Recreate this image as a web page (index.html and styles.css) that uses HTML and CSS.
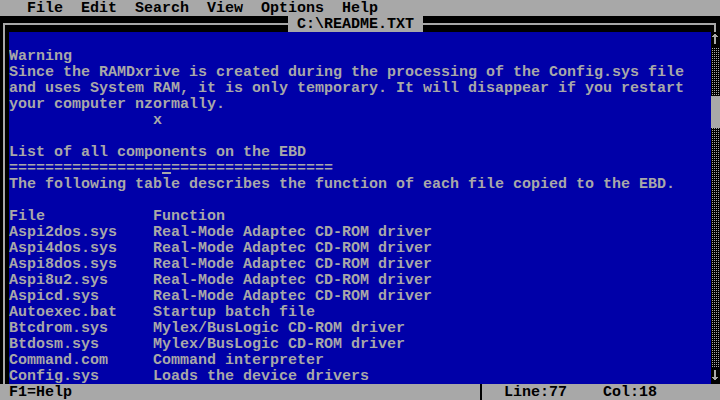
FILE: index.html
```html
<!DOCTYPE html>
<html>
<head>
<meta charset="utf-8">
<title>C:\README.TXT</title>
<link rel="stylesheet" href="styles.css">
</head>
<body>
<div class="screen">
  <div class="menubar">   File  Edit  Search  View  Options  Help</div>
  <div class="titlerow">
    <span class="corner-tl"></span><span class="hline hline-left"></span><span class="title"> C:\README.TXT </span><span class="hline hline-right"></span><span class="corner-tr"></span>
  </div>
  <div class="editor">
    <div class="vborder"></div>
    <pre class="text">

Warning
Since the RAMDxrive is created during the processing of the Config.sys file
and uses System RAM, it is only temporary. It will disappear if you restart
your computer nzormally.
                x

List of all components on the EBD
=================<span class="cursor">=</span>==================
The following table describes the function of each file copied to the EBD.

File            Function
Aspi2dos.sys    Real-Mode Adaptec CD-ROM driver
Aspi4dos.sys    Real-Mode Adaptec CD-ROM driver
Aspi8dos.sys    Real-Mode Adaptec CD-ROM driver
Aspi8u2.sys     Real-Mode Adaptec CD-ROM driver
Aspicd.sys      Real-Mode Adaptec CD-ROM driver
Autoexec.bat    Startup batch file
Btcdrom.sys     Mylex/BusLogic CD-ROM driver
Btdosm.sys      Mylex/BusLogic CD-ROM driver
Command.com     Command interpreter
Config.sys      Loads the device drivers</pre>
    <div class="scrollbar">
      <div class="arrow"><svg width="9" height="16" viewBox="0 0 9 16"><path d="M3 2h2v1h1v1h1v1h-2v7h-2v-7h-2v-1h1v-1h1z" fill="#a8a8a8"/></svg></div>
      <div class="track">
        <div class="dots track-top"></div>
        <div class="thumb"></div>
        <div class="dots track-bottom"></div>
      </div>
      <div class="arrow"><svg width="9" height="16" viewBox="0 0 9 16"><path d="M3 2h2v7h2v1h-1v1h-1v1h-2v-1h-1v-1h-1v-1h2z" fill="#a8a8a8"/></svg></div>
    </div>
  </div>
  <div class="status"> F1=Help                                             <span class="vbar"></span>  Line:77    Col:18</div>
</div>
</body>
</html>
```

FILE: styles.css
```css
* {
  box-sizing: border-box;
  margin: 0;
  padding: 0;
}

html,
body {
  background: #000;
}

body {
  width: 720px;
  height: 400px;
  overflow: hidden;
  font-family: "Liberation Mono", monospace;
  font-size: 15px;
  line-height: 16px;
  font-weight: bold;
}

.screen {
  display: flex;
  flex-direction: column;
  width: 720px;
  height: 400px;
}

.menubar {
  height: 16px;
  padding-top: 1px;
  background: #a8a8a8;
  color: #000;
  white-space: pre;
}

.titlerow {
  display: flex;
  height: 16px;
  background: #000;
}

.corner-tl {
  flex: 0 0 9px;
  background:
    linear-gradient(#a8a8a8, #a8a8a8) 3px 7px / 6px 2px no-repeat,
    linear-gradient(#a8a8a8, #a8a8a8) 3px 7px / 2px 9px no-repeat;
}

.corner-tr {
  flex: 0 0 9px;
  background:
    linear-gradient(#a8a8a8, #a8a8a8) 0 7px / 5px 2px no-repeat,
    linear-gradient(#a8a8a8, #a8a8a8) 3px 7px / 2px 9px no-repeat;
}

.hline {
  background: linear-gradient(#a8a8a8, #a8a8a8) 0 7px / 100% 2px no-repeat;
}

.hline-left {
  flex: 0 0 279px;
}

.hline-right {
  flex: 1;
}

.title {
  flex: 0 0 135px;
  padding-top: 1px;
  background: #a8a8a8;
  color: #000;
  white-space: pre;
}

.editor {
  display: flex;
  height: 352px;
}

.vborder {
  flex: 0 0 9px;
  background: #000 linear-gradient(#a8a8a8, #a8a8a8) 3px 0 / 2px 100% no-repeat;
}

.text {
  flex: 1;
  padding-top: 1px;
  background: #0000a8;
  color: #a8a8a8;
  font: inherit;
  white-space: pre;
  overflow: hidden;
}

.cursor {
  text-decoration: underline 2px #a8a8a8;
  text-underline-offset: 0;
}

.scrollbar {
  flex: 0 0 9px;
  display: flex;
  flex-direction: column;
  background: #000;
}

.arrow {
  height: 16px;
  background: #000;
}

.arrow svg {
  display: block;
}

.track {
  flex: 1;
  display: flex;
  flex-direction: column;
}

.dots {
  background: #000 conic-gradient(#a8a8a8 0 25%, #000 0 100%) 0 0 / 2px 2px;
}

.track-top {
  height: 48px;
}

.thumb {
  height: 32px;
  background: #a8a8a8;
}

.track-bottom {
  flex: 1;
}

.status {
  height: 16px;
  padding-top: 1px;
  background: #a8a8a8;
  color: #000;
  white-space: pre;
}

.vbar {
  display: inline-block;
  width: 9px;
  height: 16px;
  margin-top: -1px;
  vertical-align: top;
  background: linear-gradient(#000, #000) 3px 0 / 2px 100% no-repeat;
}
```
